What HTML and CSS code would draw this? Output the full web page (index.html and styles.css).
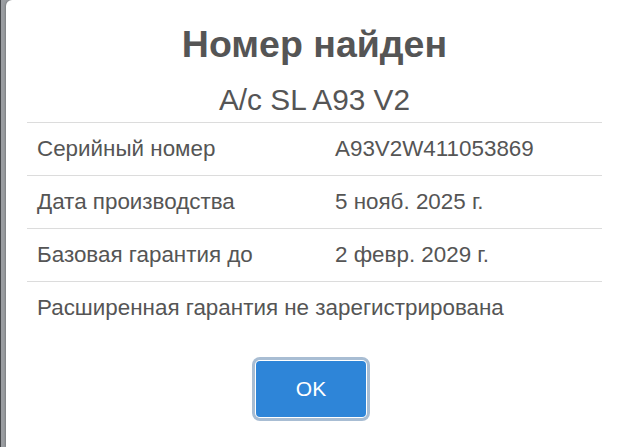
FILE: index.html
```html
<!DOCTYPE html>
<html lang="ru">
<head>
<meta charset="utf-8">
<title>Номер найден</title>
<link rel="stylesheet" href="styles.css">
</head>
<body>
<div class="backdrop">
  <div class="modal">
    <h1 class="title">Номер найден</h1>
    <h2 class="subtitle">A/c SL A93 V2</h2>
    <div class="table">
      <div class="row"><span class="label">Серийный номер</span><span class="value">A93V2W411053869</span></div>
      <div class="row"><span class="label">Дата производства</span><span class="value">5 нояб. 2025 г.</span></div>
      <div class="row"><span class="label">Базовая гарантия до</span><span class="value">2 февр. 2029 г.</span></div>
      <div class="row full"><span class="label">Расширенная гарантия не зарегистрирована</span></div>
    </div>
    <div class="actions">
      <button class="ok" type="button">OK</button>
    </div>
  </div>
</div>
</body>
</html>
```

FILE: styles.css
```css
html, body {
  margin: 0;
  padding: 0;
  height: 100%;
  overflow: hidden;
}
body {
  background: #9a9da1;
  font-family: "Liberation Sans", Arial, sans-serif;
  color: #555;
}
.backdrop {
  display: flex;
  height: 100%;
  padding-left: 5px;
  border-left: 1px solid #45484b;
  box-sizing: border-box;
}
.modal {
  flex: 1;
  background: #fff;
  border-radius: 6px 0 0 0;
  padding: 24px 22px 0 21px;
  box-shadow: -1px 0 2px rgba(0,0,0,0.2);
}
.title {
  margin: 0;
  text-align: center;
  font-size: 37.5px;
  line-height: 40px;
  font-weight: bold;
  color: #555;
}
.subtitle {
  margin: 19px 0 5px;
  text-align: center;
  font-size: 29.8px;
  line-height: 34px;
  font-weight: normal;
  color: #555;
}
.table {
  display: flex;
  flex-direction: column;
}
.row {
  display: grid;
  grid-template-columns: 298px 1fr;
  align-items: center;
  height: 52px;
  padding: 0 10px;
  border-top: 1px solid #dcdcdc;
  font-size: 22.4px;
  line-height: 26px;
}
.row.full {
  grid-template-columns: 1fr;
}
.actions {
  display: flex;
  justify-content: center;
  padding: 27px 7px 0 0;
}
.ok {
  width: 110px;
  height: 56px;
  border: none;
  border-radius: 4px;
  background: #2e85d8;
  color: #fff;
  font-family: "Liberation Sans", Arial, sans-serif;
  font-size: 21px;
  box-shadow: 0 0 0 1px #fff, 0 0 0 4px #a8bdd3;
  padding: 0;
}
```
